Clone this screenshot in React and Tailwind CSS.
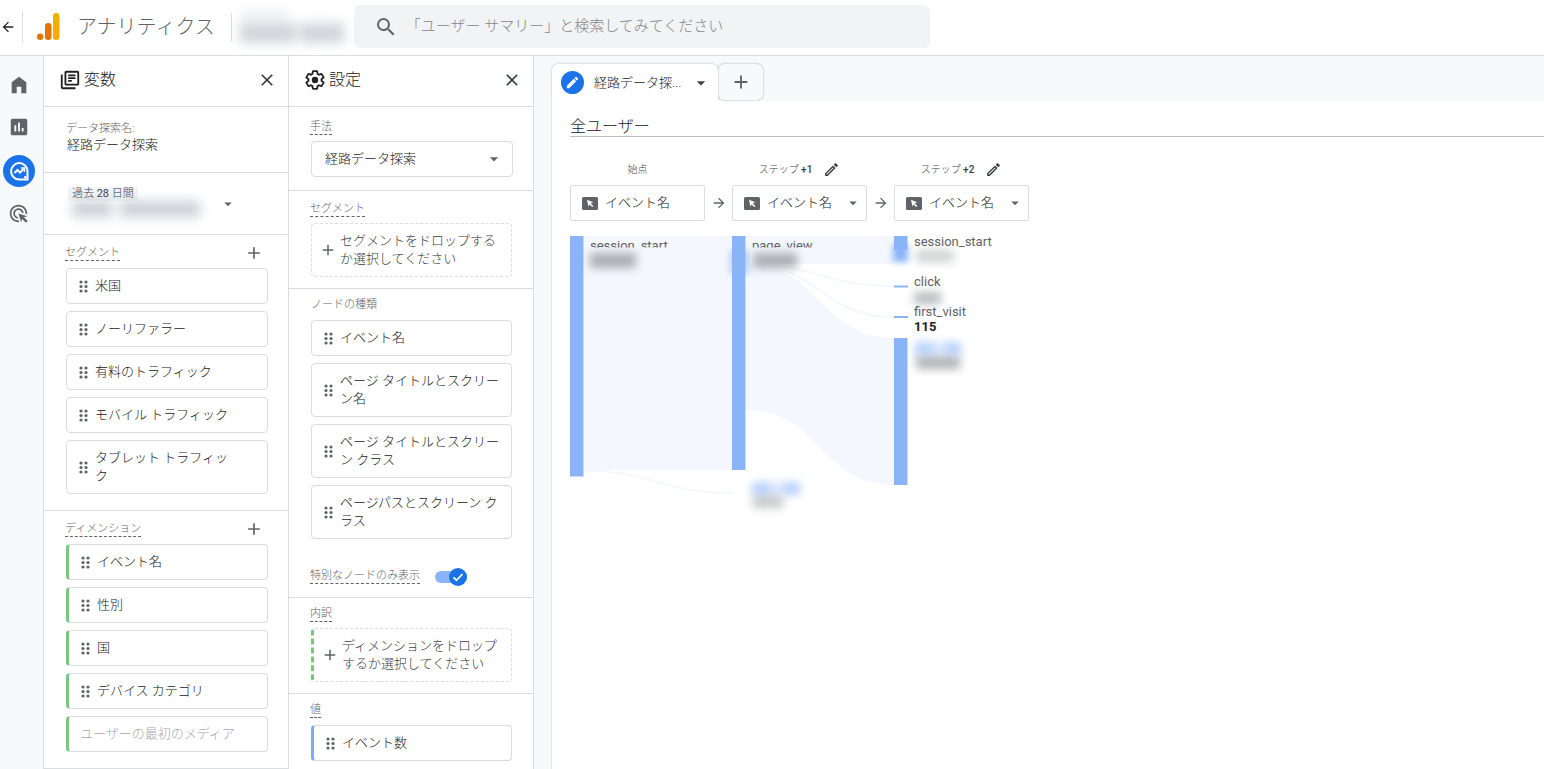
import { useState } from "react";
import {
  MdAdd,
  MdAdsClick,
  MdArrowBack,
  MdArrowDropDown,
  MdArrowForward,
  MdClose,
  MdEdit,
  MdInsertChart,
  MdOutlineEdit,
  MdOutlineLibraryBooks,
  MdSearch,
} from "react-icons/md";

const segments = [
  "米国",
  "ノーリファラー",
  "有料のトラフィック",
  "モバイル トラフィック",
  "タブレット トラフィック",
];

const dimensions = ["イベント名", "性別", "国", "デバイス カテゴリ"];

const nodeTypes = [
  "イベント名",
  "ページ タイトルとスクリーン名",
  "ページ タイトルとスクリーン クラス",
  "ページパスとスクリーン クラス",
];

const steps = [
  { label: "始点", editable: false },
  { label: "ステップ", count: "+1", editable: true },
  { label: "ステップ", count: "+2", editable: true },
];

function HomeIcon() {
  return (
    <svg viewBox="0 0 24 24" className="size-[22px]" fill="currentColor">
      <path d="M4 21V9l8-6 8 6v12h-5.500v-7h-5v7z" />
    </svg>
  );
}

function ExploreIcon() {
  return (
    <svg viewBox="0 0 24 24" className="size-6" fill="none" stroke="currentColor" strokeWidth="2">
      <path d="M20.500 20.500H12.500a8.200 8.200 0 1 1 8-8.200z" />
      <path d="M7.500 14l3-3 2.600 2.600 3.400-3.600" />
      <path d="M13.800 9h3.700v3.700" strokeWidth="1.500" />
      <circle cx="18.300" cy="18.300" r="1.300" fill="currentColor" stroke="none" />
    </svg>
  );
}

function GearIcon() {
  return (
    <svg viewBox="0 0 24 24" className="size-[22px]" fill="none" stroke="currentColor" strokeWidth="2">
      <path d="M19.140 12.940c.04-.3.06-.61.06-.94 0-.32-.02-.64-.07-.94l2.030-1.580c.18-.14.23-.41.12-.61l-1.920-3.320c-.12-.22-.37-.29-.59-.22l-2.390.96c-.5-.38-1.030-.7-1.620-.94L14.400 2.810c-.04-.24-.24-.41-.48-.41h-3.840c-.24 0-.43.17-.47.41L9.250 5.350C8.660 5.590 8.120 5.920 7.630 6.290L5.240 5.330c-.22-.08-.47 0-.59.22L2.740 8.870c-.12.21-.08.47.12.61l2.030 1.580c-.05.3-.09.63-.09.94s.02.64.07.94l-2.030 1.580c-.18.14-.23.41-.12.61l1.920 3.320c.12.22.37.29.59.22l2.390-.96c.5.38 1.030.7 1.620.94l.36 2.540c.05.24.24.41.48.41h3.840c.24 0 .44-.17.47-.41l.36-2.540c.59-.24 1.130-.56 1.620-.94l2.390.96c.22.08.47 0 .59-.22l1.920-3.320c.12-.22.07-.47-.12-.61z" />
      <circle cx="12" cy="12" r="3.500" fill="currentColor" stroke="none" />
    </svg>
  );
}

function EventIcon() {
  return (
    <svg viewBox="0 0 16 13" className="h-[13px] w-4 shrink-0">
      <rect width="16" height="13" rx="1.500" fill="#5f6368" />
      <path d="M5 2.800l6.200 2.500-2.500 1 2.600 2.800-1.100 1-2.700-2.700-1 2.300z" fill="#fff" />
    </svg>
  );
}

function DragDots() {
  return (
    <svg viewBox="0 0 9 13" className="h-[13px] w-[9px] shrink-0" fill="#5f6368">
      {[2, 6.5, 11].map((y) => (
        <g key={y}>
          <circle cx="2" cy={y} r="1.600" />
          <circle cx="7" cy={y} r="1.600" />
        </g>
      ))}
    </svg>
  );
}

function Logo() {
  return (
    <svg viewBox="0 0 24 28" className="h-7 w-6">
      <rect x="16" width="6.500" height="27" rx="3.200" fill="#f9ab00" />
      <rect x="8" y="10" width="6.500" height="17" rx="3.200" fill="#e37400" />
      <circle cx="3.200" cy="23.800" r="3.200" fill="#e37400" />
    </svg>
  );
}

function PanelHeader({ icon, title }) {
  return (
    <div className="flex h-[51px] items-center border-b border-[#dadce0] pr-[11px] pb-[2px] pl-[15px] text-[#202124]">
      {icon}
      <h2 className="ml-[3px] flex-1 text-base leading-6">{title}</h2>
      <button type="button" aria-label="閉じる" className="text-[#3c4043]">
        <MdClose className="size-5" />
      </button>
    </div>
  );
}

function SectionLabel({ children }) {
  return (
    <span className="-ml-px inline-block border-b border-dashed border-[#5f6368] text-[11px] leading-[14px] text-[#5f6368]">
      {children}
    </span>
  );
}

function Chip({ children, accent = "", className = "pr-2" }) {
  return (
    <li
      className={`flex items-center gap-[7px] rounded border border-[#dadce0] py-2 pl-3 text-[13px] leading-[18px] text-[#202124] ${accent} ${className}`}
    >
      <DragDots />
      <span>{children}</span>
    </li>
  );
}

function DropZone({ children, accent = "" }) {
  return (
    <button
      type="button"
      className={`flex w-full items-center gap-[3px] rounded border border-dashed border-[#dadce0] py-2 pr-2 pl-[7px] text-left text-[13px] leading-[18px] text-[#3c4043] ${accent}`}
    >
      <MdAdd className="size-[18px] shrink-0 text-[#5f6368]" />
      <span>{children}</span>
    </button>
  );
}

function VariablesPanel() {
  return (
    <section className="w-[245px] shrink-0 overflow-hidden border-r border-[#dadce0] bg-white">
      <PanelHeader icon={<MdOutlineLibraryBooks className="size-[22px]" />} title="変数" />

      <div className="border-b border-[#dadce0] px-[22px] pt-[15px] pb-[18px]">
        <label htmlFor="exploration-name" className="block text-[11px] leading-[14px] text-[#5f6368]">
          データ探索名:
        </label>
        <input
          id="exploration-name"
          defaultValue="経路データ探索"
          className="block h-[18px] w-full pl-px text-[13px] leading-[18px] text-[#202124]"
        />
      </div>

      <button
        type="button"
        className="flex h-[62px] w-full items-center border-b border-[#dadce0] pr-[51px] pl-6 text-left"
      >
        <span className="flex-1">
          <span className="block w-fit bg-[#f1f3f4] px-1 text-[11px] leading-[14px] text-[#3c4043]">
            過去 <span className="font-normal">28</span> 日間
          </span>
          <span className="flex h-5 gap-2 pl-1 opacity-50 blur-[6px]">
            <span className="h-4 w-10 bg-gray-400" />
            <span className="h-4 w-20 bg-gray-400" />
          </span>
        </span>
        <MdArrowDropDown className="size-[18px] text-[#5f6368]" />
      </button>

      <div className="border-b border-[#dadce0] pt-2 pr-5 pb-4 pl-[22px]">
        <div className="mb-[5px] flex items-center justify-between">
          <SectionLabel>セグメント</SectionLabel>
          <button type="button" aria-label="セグメントを追加" className="mr-1 text-[#5f6368]">
            <MdAdd className="size-5" />
          </button>
        </div>
        <ul className="flex flex-col gap-[7px]">
          {segments.map((name) => (
            <Chip key={name} className="pr-8">
              {name}
            </Chip>
          ))}
        </ul>
      </div>

      <div className="border-b border-[#dadce0] pt-2 pr-5 pb-4 pl-[22px]">
        <div className="mb-[5px] flex items-center justify-between">
          <SectionLabel>ディメンション</SectionLabel>
          <button type="button" aria-label="ディメンションを追加" className="mr-1 text-[#5f6368]">
            <MdAdd className="size-5" />
          </button>
        </div>
        <ul className="flex flex-col gap-[7px]">
          {dimensions.map((name) => (
            <Chip key={name} accent="border-l-3 border-l-[#7bc67e]">
              {name}
            </Chip>
          ))}
          <li className="rounded border border-l-3 border-[#dadce0] border-l-[#7bc67e] py-2 pl-[11px] text-[13px] leading-[18px] text-[#a4a7ab]">
            ユーザーの最初のメディア
          </li>
        </ul>
      </div>
    </section>
  );
}

function SettingsPanel() {
  const [uniqueOnly, setUniqueOnly] = useState(true);

  return (
    <section className="w-[245px] shrink-0 overflow-hidden border-r border-[#dadce0] bg-white">
      <PanelHeader icon={<GearIcon />} title="設定" />

      <div className="border-b border-[#dadce0] pt-[13px] pr-5 pb-[13px] pl-[22px]">
        <label htmlFor="technique" className="flex">
          <SectionLabel>手法</SectionLabel>
        </label>
        <div className="mt-[6px] flex h-9 items-center rounded border border-[#dadce0] pr-2">
          <select
            id="technique"
            className="h-full flex-1 appearance-none pl-[13px] text-[13px] text-[#202124]"
          >
            <option>経路データ探索</option>
          </select>
          <MdArrowDropDown className="pointer-events-none size-5 text-[#5f6368]" />
        </div>
      </div>

      <div className="border-b border-[#dadce0] pt-[11px] pr-[21px] pb-[11px] pl-[22px]">
        <div className="mb-[6px] flex">
          <SectionLabel>セグメント</SectionLabel>
        </div>
        <DropZone>セグメントをドロップするか選択してください</DropZone>
      </div>

      <div className="border-b border-[#dadce0] pt-[9px] pr-[21px] pb-[13px] pl-[22px]">
        <h3 className="mb-2 text-[11px] leading-[14px] text-[#5f6368]">ノードの種類</h3>
        <ul className="flex flex-col gap-[7px]">
          {nodeTypes.map((name) => (
            <Chip key={name}>{name}</Chip>
          ))}
        </ul>
        <label className="mt-[30px] flex items-center gap-[15px]">
          <SectionLabel>特別なノードのみ表示</SectionLabel>
          <input
            type="checkbox"
            checked={uniqueOnly}
            onChange={(e) => setUniqueOnly(e.target.checked)}
            className="peer sr-only"
          />
          <span className="flex h-3 w-8 items-center justify-start rounded-full bg-gray-300 peer-checked:justify-end peer-checked:bg-[#8ab4f8]">
            <svg viewBox="0 0 18 18" className="size-[18px]">
              <circle cx="9" cy="9" r="9" fill="#1a73e8" />
              <path d="M4.500 9.300l3 3 6-6.300" fill="none" stroke="#fff" strokeWidth="1.800" />
            </svg>
          </span>
        </label>
      </div>

      <div className="border-b border-[#dadce0] pt-[9px] pr-[21px] pb-[11px] pl-[22px]">
        <div className="mb-[6px] flex">
          <SectionLabel>内訳</SectionLabel>
        </div>
        <DropZone accent="border-l-3 border-l-[#7bc67e]">
          ディメンションをドロップするか選択してください
        </DropZone>
      </div>

      <div className="pt-[9px] pr-[21px] pl-[22px]">
        <div className="mb-[7px] flex">
          <SectionLabel>値</SectionLabel>
        </div>
        <ul>
          <Chip accent="border-l-3 border-l-[#7baaf7]">イベント数</Chip>
        </ul>
      </div>
    </section>
  );
}

function PathChart() {
  return (
    <svg
      viewBox="0 0 460 290"
      className="mt-[15px] h-[290px] w-[460px] overflow-visible font-normal"
      fontSize="13"
      fill="#5f6368"
    >
      {/* flows */}
      <g fill="#f4f7fe">
        <path d="M14 0h148v234H14z" />
        <path d="M176 0h148v28H176z" />
        <path d="M176 28C250 28 250 102 324 102V249C250 249 250 174 176 174z" />
      </g>
      <g fill="none" stroke="#f4f7fe" strokeWidth="2">
        <path d="M14 235C88 235 88 257 162 257" />
        <path d="M176 28C250 28 250 50 324 50" />
        <path d="M176 28C250 28 250 81 324 81" />
      </g>

      {/* nodes */}
      <g fill="#c9dcfc">
        <path d="M0 0h14v241H0zM162 0h14v234h-14zM324 0h14v14h-14zM324 102h14v147h-14z" />
      </g>
      <g fill="#8ab4f8">
        <path d="M0 0h13v240H0zM162 0h13v234h-13zM324 0h13v14h-13zM324 102h13v147h-13z" />
        <path d="M324 49.500h14v2h-14zM324 80h14v2h-14z" />
      </g>
      <rect x="323" y="8" width="15" height="18" fill="#8ab4f8" className="blur-[3px]" />
      <rect x="159" y="14" width="20" height="24" fill="#8ab4f8" className="opacity-50 blur-[3px]" />

      <text x="20" y="14">session_start</text>
      <text x="182" y="14">page_view</text>
      <path d="M20 11.500h100v16H20zM180 11.500h100v16H180z" fill="#f4f7fe" />
      <text x="344" y="10">session_start</text>
      <text x="344" y="50">click</text>
      <text x="344" y="80">first_visit</text>
      <text x="344" y="95" fill="#202124" fontWeight="700">115</text>

      {/* masked values */}
      <g fill="#3c4043" className="opacity-40 blur-[5px]">
        <rect x="20" y="17" width="46" height="15" />
        <rect x="183" y="17" width="44" height="15" />
        <rect x="346" y="14" width="38" height="12" opacity="0.6" />
        <rect x="344" y="56" width="27" height="12" opacity="0.9" />
        <rect x="346" y="120" width="44" height="13" />
        <rect x="183" y="259" width="30" height="13" opacity="0.7" />
      </g>
      <g fill="#8ab4f8" className="opacity-60 blur-[4px]">
        <rect x="345" y="106" width="18" height="13" />
        <rect x="363" y="106" width="12" height="13" opacity="0.5" />
        <rect x="375" y="106" width="16" height="13" />
        <rect x="182" y="246" width="18" height="13" />
        <rect x="200" y="246" width="14" height="13" opacity="0.5" />
        <rect x="214" y="246" width="16" height="13" />
      </g>
    </svg>
  );
}

function Canvas() {
  return (
    <main className="flex min-w-0 flex-1 flex-col pt-2 pl-[17px]">
      <div className="flex pl-px">
        <div className="z-10 flex h-[37px] items-center rounded-t-md bg-white pr-[7px] pl-[9px] shadow-[0_0_2px_rgba(60,64,67,0.4)]">
          <span className="flex size-[23px] items-center justify-center rounded-full bg-[#1a73e8] text-white">
            <MdEdit className="size-[15px]" />
          </span>
          <span className="ml-[10px] w-[89px] text-[13px] whitespace-nowrap text-[#202124]">
            経路データ探...
          </span>
          <button type="button" aria-label="タブのメニュー" className="ml-2 text-[#3c4043]">
            <MdArrowDropDown className="size-5" />
          </button>
        </div>
        <button
          type="button"
          aria-label="タブを追加"
          className="flex h-9 w-[45px] items-center justify-center rounded-md text-[#5f6368] shadow-[0_0_2px_rgba(60,64,67,0.5)]"
        >
          <MdAdd className="size-[22px]" />
        </button>
      </div>

      <div className="z-10 flex-1 border-l border-[#e4e6e9] bg-white pt-[17px] pl-[18px]">
        <h1 className="border-b border-[#bdbdbd] text-base leading-[18px] text-[#202124]">全ユーザー</h1>

        <div className="mt-[21px] flex">
          {steps.map((step, i) => (
            <div key={i} className="flex items-end">
              {i > 0 && (
                <span className="flex h-9 w-[27px] items-center justify-center text-[#5f6368]">
                  <MdArrowForward className="size-4" />
                </span>
              )}
              <div className="w-[135px]">
                <div className="flex h-[22px] items-center justify-center text-[10px] text-[#3c4043]">
                  <label htmlFor={`step-${i}`}>
                    {step.label} <span className="font-medium">{step.count}</span>
                  </label>
                  {step.editable && (
                    <button type="button" aria-label="編集" className="ml-[11px]">
                      <MdOutlineEdit className="size-[17px]" />
                    </button>
                  )}
                </div>
                <div className="mt-[5px] flex h-9 items-center rounded-xs border border-[#dadce0] pr-1 pl-[11px]">
                  <EventIcon />
                  {step.editable ? (
                    <>
                      <select
                        id={`step-${i}`}
                        className="h-full min-w-0 flex-1 appearance-none pl-[7px] text-[13px] text-[#202124]"
                      >
                        <option>イベント名</option>
                      </select>
                      <MdArrowDropDown className="pointer-events-none size-[18px] text-[#5f6368]" />
                    </>
                  ) : (
                    <button id={`step-${i}`} type="button" className="pl-[7px] text-[13px] text-[#202124]">
                      イベント名
                    </button>
                  )}
                </div>
              </div>
            </div>
          ))}
        </div>

        <PathChart />
      </div>
    </main>
  );
}

export default function App() {
  return (
    <div
      lang="ja"
      className="flex h-screen flex-col overflow-hidden bg-white font-[Roboto,'Noto_Sans_CJK_JP',sans-serif] font-light"
    >
      <header className="flex h-14 shrink-0 items-center border-b border-[#dadce0] pb-[2px]">
        <a href="#back" aria-label="戻る" className="flex w-[22px] text-[#202124]">
          <MdArrowBack className="size-4" />
        </a>
        <div className="flex h-8 items-center border-l border-[#dadce0] pl-[14px]">
          <Logo />
          <span className="ml-4 text-xl text-[#5f6368]">アナリティクス</span>
        </div>
        <div className="ml-4 h-7 w-px bg-[#dadce0]" />
        <div className="ml-2 w-[114px] opacity-45 blur-[6px]">
          <div className="h-2 w-12 bg-gray-300" />
          <div className="mt-1 flex gap-1">
            <div className="h-5 w-14 bg-gray-400" />
            <div className="h-5 w-11 bg-gray-400" />
          </div>
        </div>
        <label className="flex h-[43px] w-[576px] items-center rounded-md bg-[#f1f3f4] pl-5">
          <MdSearch className="size-6 text-[#5f6368]" />
          <input
            type="search"
            aria-label="検索"
            placeholder="「ユーザー サマリー」と検索してみてください"
            className="ml-2 flex-1 bg-transparent text-[15px] outline-none placeholder:text-[#80868b]"
          />
        </label>
      </header>

      <div className="flex min-h-0 flex-1 bg-[#f8f9fb]">
        <nav className="flex w-11 shrink-0 flex-col items-center border-r border-[#dadce0] pt-[18px] pr-[6px] text-[#5f6368]">
          <a href="#home" aria-label="ホーム">
            <HomeIcon />
          </a>
          <a href="#reports" aria-label="レポート" className="mt-5">
            <MdInsertChart className="size-[22px]" />
          </a>
          <a
            href="#explore"
            aria-label="探索"
            className="mt-[17px] flex size-8 shrink-0 items-center justify-center rounded-full bg-[#1a73e8] text-white"
          >
            <ExploreIcon />
          </a>
          <a href="#ads" aria-label="広告" className="mt-4">
            <MdAdsClick className="size-[21px]" />
          </a>
        </nav>
        <VariablesPanel />
        <SettingsPanel />
        <Canvas />
      </div>
    </div>
  );
}
